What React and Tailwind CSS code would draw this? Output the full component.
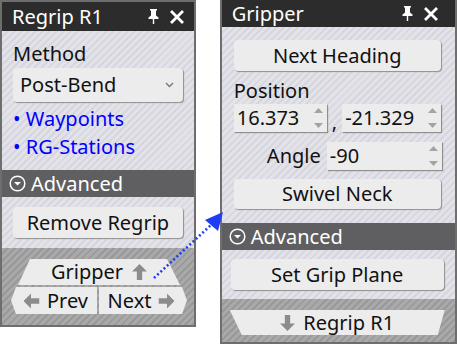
import React from 'react'

const light = 'bg-[repeating-linear-gradient(135deg,#e2e2e8_0px,#e2e2e8_3px,#d6d6de_3px,#d6d6de_5px)]'
const dark = 'bg-[repeating-linear-gradient(135deg,#a9a9a9_0px,#a9a9a9_3px,#999999_3px,#999999_5px)]'
const btn = 'flex items-center rounded-[4px] bg-[#ececec] shadow-[1px_1px_1px_#8f8f8f] text-[20px] text-[#111]'

function Pin() {
  return (
    <svg width="11" height="15" viewBox="0 0 11 15">
      <path d="M2 0h7v1.5H8v5l2.5 2v1.5H6.2V15H4.8V10H0.5V8.5L3 6.5v-5H2z" fill="#fff" />
    </svg>
  )
}

function Close() {
  return (
    <svg width="14" height="14" viewBox="0 0 14 14">
      <path d="M2 2l10 10M12 2L2 12" stroke="#fff" strokeWidth="2.8" strokeLinecap="square" />
    </svg>
  )
}

function TitleBar({ title, h }) {
  return (
    <div className={`flex items-center bg-[#2c2c2c] pl-[10px] pr-[10px] text-white ${h}`}>
      <span className="text-[20px] leading-none">{title}</span>
      <div className="ml-auto flex items-center gap-[11px]">
        <Pin />
        <Close />
      </div>
    </div>
  )
}

function Advanced() {
  return (
    <div className="flex h-[27px] items-center gap-[5px] bg-[#5f5f62] pl-[7px] text-[20px] text-white">
      <svg width="17" height="17" viewBox="0 0 17 17">
        <circle cx="8.5" cy="8.5" r="7.3" stroke="#fff" strokeWidth="1.5" fill="none" />
        <path d="M5 7l3.5 3.5L12 7z" fill="#fff" />
      </svg>
      <span className="leading-none">Advanced</span>
    </div>
  )
}

function Spinner() {
  return (
    <div className="flex h-full flex-col justify-between py-[4px] pr-[4px]">
      <svg width="9" height="5" viewBox="0 0 9 5"><path d="M0 5L4.5 0L9 5z" fill="#a3a3a3" /></svg>
      <svg width="9" height="5" viewBox="0 0 9 5"><path d="M0 0L4.5 5L9 0z" fill="#a3a3a3" /></svg>
    </div>
  )
}

function NumField({ value, w }) {
  return (
    <div className={`flex h-[28px] items-center justify-between bg-[#ececec] pl-[3px] shadow-[1px_1px_1px_#8f8f8f] ${w}`}>
      <span className="text-[20px] leading-none text-[#111]">{value}</span>
      <Spinner />
    </div>
  )
}

function BlockArrow({ dir }) {
  const rot = { up: 0, left: -90, right: 90, down: 180 }[dir]
  return (
    <svg width="15" height="16" viewBox="0 0 14 15" style={{ transform: `rotate(${rot}deg)` }}>
      <path d="M7 0L14 7H9.5V15H4.5V7H0z" fill="#8c8c8c" />
    </svg>
  )
}

export default function App() {
  return (
    <div className="relative h-[353px] w-[457px] overflow-hidden bg-white font-['Noto_Sans',sans-serif]">
      <div className="flex items-start gap-[24px]">
        {/* left panel */}
        <div className="flex w-[198px] flex-col border-2 border-[#6e6e6e]">
          <TitleBar title="Regrip R1" h="h-[29px]" />
          <div className={`flex h-[139px] flex-col px-[11px] pt-[10px] ${light}`}>
            <div className="text-[20px] leading-[25px] text-[#111]">Method</div>
            <div className={`mt-[2px] h-[34px] justify-between pl-[7px] pr-[9px] ${btn}`}>
              <span>Post-Bend</span>
              <svg width="9" height="6" viewBox="0 0 9 6"><path d="M1 1l3.5 3.5L8 1" stroke="#777" strokeWidth="1.4" fill="none" /></svg>
            </div>
            <div className="mt-[3px] text-[20px] leading-[28px] text-[#0000ff]">• Waypoints</div>
            <div className="text-[20px] leading-[28px] text-[#0000ff]">• RG-Stations</div>
          </div>
          <Advanced />
          <div className={`h-[51px] px-[11px] pt-[10px] ${light}`}>
            <div className={`h-[31px] justify-center ${btn}`}>Remove Regrip</div>
          </div>
          <div className={`flex h-[77px] flex-col items-start pl-[9px] pt-[11px] ${dark}`}>
            <div className="ml-[7px] flex h-[26px] w-[162px] items-center justify-center gap-[9px] bg-[#ececec] text-[20px] text-[#111] [clip-path:polygon(12px_0,calc(100%-13px)_0,100%_100%,0_100%)]">
              <span className="leading-none">Gripper</span>
              <BlockArrow dir="up" />
            </div>
            <div className="mt-[2px] flex h-[27px] gap-[2px]">
              <div className="flex w-[86px] items-center justify-center gap-[8px] bg-[#ececec] pl-[4px] text-[20px] text-[#111] [clip-path:polygon(5px_0,100%_0,100%_100%,5px_100%,0_50%)]">
                <BlockArrow dir="left" />
                <span className="leading-none">Prev</span>
              </div>
              <div className="flex w-[88px] items-center justify-center gap-[8px] bg-[#ececec] pr-[4px] text-[20px] text-[#111] [clip-path:polygon(0_0,calc(100%-5px)_0,100%_50%,calc(100%-5px)_100%,0_100%)]">
                <span className="leading-none">Next</span>
                <BlockArrow dir="right" />
              </div>
            </div>
          </div>
        </div>

        {/* right panel */}
        <div className="flex h-[344px] w-[240px] flex-col border-2 border-t-0 border-[#6e6e6e]">
          <TitleBar title="Gripper" h="h-[27px] pr-[17px]" />
          <div className={`flex h-[196px] flex-col px-[12px] pt-[13px] ${light}`}>
            <div className={`h-[31px] w-[207px] justify-center ${btn}`}>Next Heading</div>
            <div className="mt-[7px] text-[20px] leading-[26px] text-[#111]">Position</div>
            <div className="flex w-[208px] items-end">
              <NumField value="16.373" w="w-[93px]" />
              <span className="mx-[5px] text-[20px] leading-[20px] text-[#111]">,</span>
              <NumField value="-21.329" w="w-[99px]" />
            </div>
            <div className="mt-[10px] flex w-[208px] items-center justify-end gap-[6px]">
              <span className="text-[20px] leading-none text-[#111]">Angle</span>
              <NumField value="-90" w="w-[115px]" />
            </div>
            <div className={`mt-[9px] h-[30px] w-[207px] justify-center ${btn}`}>Swivel Neck</div>
          </div>
          <Advanced />
          <div className={`h-[49px] pl-[9px] pt-[9px] ${light}`}>
            <div className={`h-[31px] w-[213px] justify-center ${btn}`}>Set Grip Plane</div>
          </div>
          <div className={`flex flex-1 flex-col pl-[8px] pt-[11px] ${dark}`}>
            <div className="flex h-[25px] w-[215px] items-center justify-center gap-[8px] bg-[#ececec] text-[20px] text-[#111] [clip-path:polygon(0_0,100%_0,calc(100%-7px)_100%,12px_100%)]">
              <BlockArrow dir="down" />
              <span className="leading-none">Regrip R1</span>
            </div>
          </div>
        </div>
      </div>

      {/* link arrow */}
      <svg className="pointer-events-none absolute left-0 top-0" width="457" height="353">
        <line x1="154" y1="278" x2="211" y2="225" stroke="#1f3df5" strokeWidth="2.6" strokeDasharray="2 2.4" />
        <path d="M223 212L218 231L205 220z" fill="#1f3df5" />
      </svg>
    </div>
  )
}
